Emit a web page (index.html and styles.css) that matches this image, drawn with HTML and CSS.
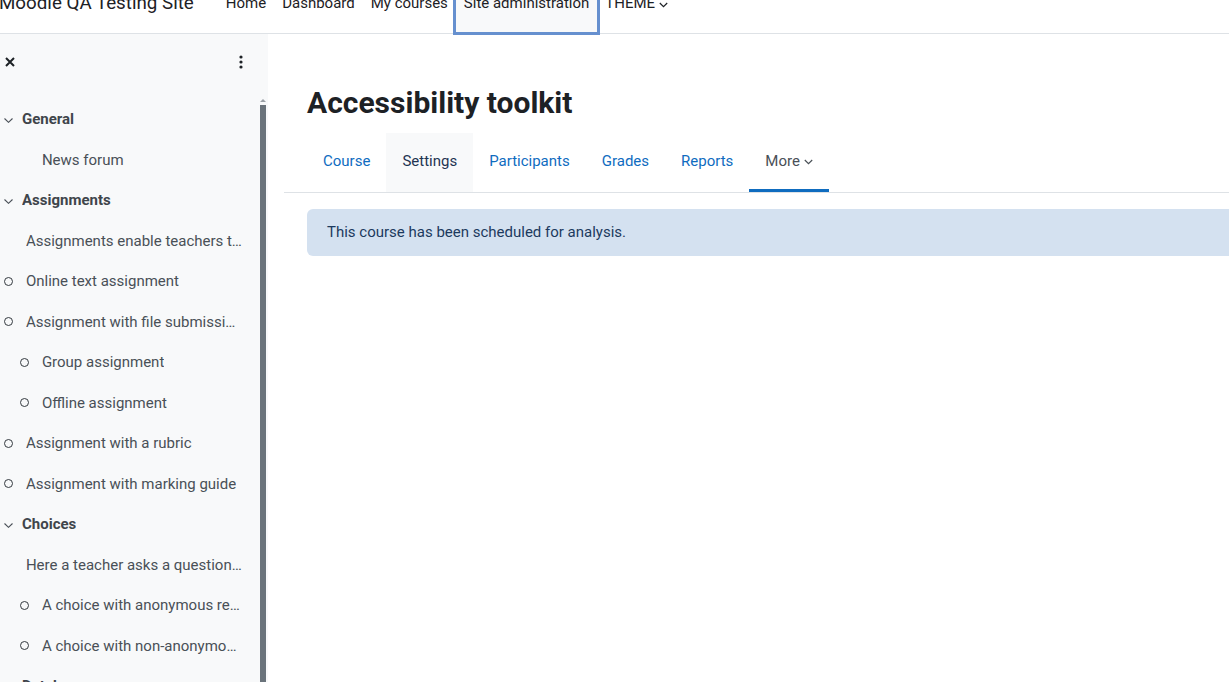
FILE: index.html
```html
<!DOCTYPE html>
<html lang="en">
<head>
    <meta charset="UTF-8">
    <title>Course: Accessibility toolkit | Moodle QA Testing Site</title>
    <link rel="stylesheet" href="styles.css">
</head>
<body>
    <div class="page">
        <nav class="navbar">
            <span class="brand">Moodle QA Testing Site</span>
            <ul class="primary-nav">
                <li><a class="nav-link" href="#">Home</a></li>
                <li><a class="nav-link" href="#">Dashboard</a></li>
                <li><a class="nav-link" href="#">My courses</a></li>
                <li><a class="nav-link focused" href="#">Site administration</a></li>
                <li>
                    <a class="nav-link" href="#">THEME
                        <svg class="caret" width="9" height="6" viewBox="0 0 9 6"><polyline points="0.8,1 4.5,4.6 8.2,1" fill="none" stroke="currentColor" stroke-width="1.2"/></svg>
                    </a>
                </li>
            </ul>
        </nav>

        <div class="wrapper">
            <aside class="drawer">
                <div class="drawer-header">
                    <svg width="10" height="10" viewBox="0 0 10 10"><path d="M1 1L9 9M9 1L1 9" stroke="#1d2125" stroke-width="2"/></svg>
                    <svg width="4" height="14" viewBox="0 0 4 14"><circle cx="2" cy="2" r="1.6" fill="#1d2125"/><circle cx="2" cy="7" r="1.6" fill="#1d2125"/><circle cx="2" cy="12" r="1.6" fill="#1d2125"/></svg>
                </div>
                <div class="drawer-body">
                    <ul class="courseindex">
                        <li class="ci-section">
                            <svg class="chev" width="9" height="5" viewBox="0 0 9 5"><polyline points="0.5,0.5 4.5,4.3 8.5,0.5" fill="none" stroke="currentColor" stroke-width="1.1"/></svg>
                            <span class="ci-name">General</span>
                        </li>
                        <li class="ci-item lvl-2"><span class="ci-icon empty"></span><span class="ci-name">News forum</span></li>
                        <li class="ci-section">
                            <svg class="chev" width="9" height="5" viewBox="0 0 9 5"><polyline points="0.5,0.5 4.5,4.3 8.5,0.5" fill="none" stroke="currentColor" stroke-width="1.1"/></svg>
                            <span class="ci-name">Assignments</span>
                        </li>
                        <li class="ci-item"><span class="ci-icon empty"></span><span class="ci-name">Assignments enable teachers to grade and give comments</span></li>
                        <li class="ci-item"><span class="ci-icon"></span><span class="ci-name">Online text assignment</span></li>
                        <li class="ci-item"><span class="ci-icon"></span><span class="ci-name">Assignment with file submissions</span></li>
                        <li class="ci-item lvl-2"><span class="ci-icon"></span><span class="ci-name">Group assignment</span></li>
                        <li class="ci-item lvl-2"><span class="ci-icon"></span><span class="ci-name">Offline assignment</span></li>
                        <li class="ci-item"><span class="ci-icon"></span><span class="ci-name">Assignment with a rubric</span></li>
                        <li class="ci-item"><span class="ci-icon"></span><span class="ci-name">Assignment with marking guide</span></li>
                        <li class="ci-section">
                            <svg class="chev" width="9" height="5" viewBox="0 0 9 5"><polyline points="0.5,0.5 4.5,4.3 8.5,0.5" fill="none" stroke="currentColor" stroke-width="1.1"/></svg>
                            <span class="ci-name">Choices</span>
                        </li>
                        <li class="ci-item"><span class="ci-icon empty"></span><span class="ci-name">Here a teacher asks a question and specifies a choice</span></li>
                        <li class="ci-item lvl-2"><span class="ci-icon"></span><span class="ci-name">A choice with anonymous results</span></li>
                        <li class="ci-item lvl-2"><span class="ci-icon"></span><span class="ci-name">A choice with non-anonymous results</span></li>
                        <li class="ci-section">
                            <svg class="chev" width="9" height="5" viewBox="0 0 9 5"><polyline points="0.5,0.5 4.5,4.3 8.5,0.5" fill="none" stroke="currentColor" stroke-width="1.1"/></svg>
                            <span class="ci-name">Database</span>
                        </li>
                    </ul>
                    <div class="scrollbar">
                        <span class="scroll-arrow"></span>
                        <span class="scroll-thumb"></span>
                    </div>
                </div>
            </aside>

            <main class="main">
                <h2 class="page-title">Accessibility toolkit</h2>
                <div class="secondary-nav">
                    <ul class="tabs">
                        <li><a class="tab" href="#">Course</a></li>
                        <li><a class="tab current" href="#">Settings</a></li>
                        <li><a class="tab" href="#">Participants</a></li>
                        <li><a class="tab" href="#">Grades</a></li>
                        <li><a class="tab" href="#">Reports</a></li>
                        <li>
                            <a class="tab more active" href="#">More
                                <svg class="caret" width="9" height="6" viewBox="0 0 9 6"><polyline points="0.8,1 4.5,4.6 8.2,1" fill="none" stroke="currentColor" stroke-width="1.2"/></svg>
                            </a>
                        </li>
                    </ul>
                </div>
                <div class="alert-info">This course has been scheduled for analysis.</div>
            </main>
        </div>
    </div>
</body>
</html>
```

FILE: styles.css
```css
html, body{
    margin: 0;
    height: 100%;
    overflow: hidden;
}
body{
    font-family: Roboto, "Liberation Sans", sans-serif;
    font-size: 15px;
    line-height: 1.5;
    color: #1d2125;
    background: #fff;
}
ul{
    list-style: none;
    margin: 0;
    padding: 0;
}
a{
    text-decoration: none;
}
.page{
    width: 1320px;
    height: 100%;
    display: flex;
    flex-direction: column;
}

/* top bar, page is scrolled a bit so it is cut */
.navbar{
    height: 59px;
    margin-top: -26px;
    border-bottom: 1px solid #dee2e6;
    display: flex;
    align-items: stretch;
    flex: none;
}
.brand{
    font-size: 18.75px;
    align-self: center;
    margin-left: -1px;
    margin-right: 24px;
    color: #1d2125;
}
.primary-nav{
    display: flex;
    align-items: stretch;
}
.primary-nav li{
    display: flex;
    align-items: flex-start;
}
.nav-link{
    display: flex;
    align-items: center;
    padding: 0 8px;
    height: 59px;
    box-sizing: border-box;
    color: #1d2125;
}
.nav-link.focused{
    background: #f8f9fa;
    outline: 3px solid #6690cf;
    height: 58px;
    padding-top: 1px;
}
.caret{
    margin-left: 4px;
    margin-top: 2px;
}

.wrapper{
    flex: 1;
    display: flex;
    min-height: 0;
}

/* course index drawer */
.drawer{
    width: 268px;
    flex: none;
    background: #f8f9fa;
    display: flex;
    flex-direction: column;
}
.drawer-header{
    height: 65px;
    box-sizing: border-box;
    flex: none;
    display: flex;
    align-items: flex-start;
    justify-content: space-between;
    padding: 23px 25px 0 5px;
}
.drawer-header svg:last-child{
    margin-top: -2px;
}
.drawer-body{
    flex: 1;
    display: flex;
    min-height: 0;
}
.courseindex{
    flex: 1;
    min-width: 0;
    overflow: hidden;
    color: #495057;
}
.ci-section, .ci-item{
    display: flex;
    align-items: center;
    padding: 9px 17.5px 9px 3px;
    height: 22.5px;
}
.ci-section{
    font-weight: bold;
    color: #3f454b;
    padding-left: 4px;
    gap: 9px;
}
.chev{
    flex: none;
    margin-top: 3px;
    color: #495057;
}
.ci-item{
    gap: 13px;
}
.ci-item.lvl-2{
    padding-left: 19px;
}
.ci-icon{
    flex: none;
    width: 7.4px;
    height: 7.4px;
    border: 1.3px solid #343a40;
    border-radius: 50%;
    margin-left: 0.5px;
}
.ci-icon.empty{
    visibility: hidden;
}
.ci-name{
    white-space: nowrap;
    overflow: hidden;
    text-overflow: ellipsis;
    min-width: 0;
}
.scrollbar{
    width: 6px;
    flex: none;
    margin-right: 2px;
    display: flex;
    flex-direction: column;
    align-items: center;
}
.scroll-arrow{
    width: 0;
    height: 0;
    border-left: 3px solid transparent;
    border-right: 3px solid transparent;
    border-bottom: 3px solid #9aa0a6;
    margin: 0 0 3px;
}
.scroll-thumb{
    flex: 1;
    width: 6px;
    background: #6a737b;
}

/* main column */
.main{
    flex: 1;
    padding-left: 16px;
}
.page-title{
    margin: 51px 0 12px 23px;
    font-size: 30px;
    line-height: 1.2;
    font-weight: bold;
    color: #1d2125;
}
.secondary-nav{
    border-bottom: 1px solid #dee2e6;
}
.tabs{
    display: flex;
    padding-left: 23px;
}
.tab{
    display: flex;
    align-items: center;
    padding: 17px 16px 19.5px;
    color: #0f6cbf;
    box-sizing: border-box;
    height: 59px;
}
.tab.current{
    background: #f8f9fa;
    color: #1f3452;
}
.tab.more{
    color: #495057;
}
.tab.active{
    border-bottom: 3px solid #0f6cbf;
    padding-bottom: 16.5px;
}
.alert-info{
    margin: 16px 0 0 23px;
    padding: 12px 20px;
    background: #d4e1f0;
    color: #1c3a5e;
    border-radius: 6px;
}
```
